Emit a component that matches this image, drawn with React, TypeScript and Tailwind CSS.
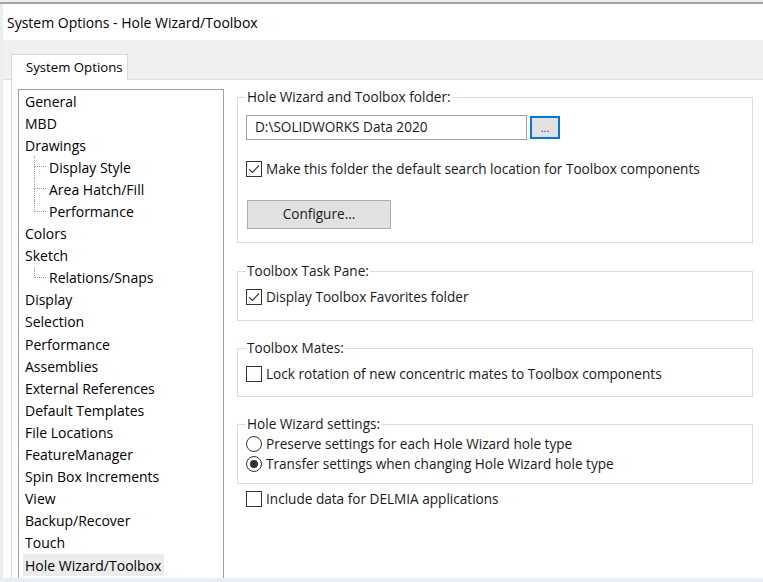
import React from 'react';

const FONT = { fontFamily: '"Open Sans", "Noto Sans", sans-serif' };

type TreeItem = { label: string; child?: boolean; last?: boolean; selected?: boolean };

const treeItems: TreeItem[] = [
  { label: 'General' },
  { label: 'MBD' },
  { label: 'Drawings' },
  { label: 'Display Style', child: true },
  { label: 'Area Hatch/Fill', child: true },
  { label: 'Performance', child: true, last: true },
  { label: 'Colors' },
  { label: 'Sketch' },
  { label: 'Relations/Snaps', child: true, last: true },
  { label: 'Display' },
  { label: 'Selection' },
  { label: 'Performance' },
  { label: 'Assemblies' },
  { label: 'External References' },
  { label: 'Default Templates' },
  { label: 'File Locations' },
  { label: 'FeatureManager' },
  { label: 'Spin Box Increments' },
  { label: 'View' },
  { label: 'Backup/Recover' },
  { label: 'Touch' },
  { label: 'Hole Wizard/Toolbox', selected: true },
];

function TreeRow({ item }: { item: TreeItem }) {
  if (item.child) {
    return (
      <div className="flex h-[22.1px] items-stretch">
        <div className="ml-[15px] flex w-[12px] flex-col">
          <div className="h-1/2 border-b border-l border-dotted border-[#a0a0a0]" />
          <div className={item.last ? 'h-1/2' : 'h-1/2 border-l border-dotted border-[#a0a0a0]'} />
        </div>
        <div className="flex items-center pl-[3px]">{item.label}</div>
      </div>
    );
  }
  return (
    <div className="flex h-[22.1px] items-stretch pl-[4px]">
      <div className={item.selected ? 'flex items-center bg-[#ececec] pl-[2px] pr-[3px]' : 'flex items-center pl-[2px]'}>
        {item.label}
      </div>
    </div>
  );
}

function CheckBox({ checked }: { checked?: boolean }) {
  return (
    <div className="flex h-[16px] w-[16px] shrink-0 items-center justify-center border border-[#333333] bg-white">
      {checked && (
        <svg width="14" height="14" viewBox="0 0 14 14">
          <polyline points="2,7.2 5.3,10.5 12,3.5" fill="none" stroke="#333333" strokeWidth="1.1" />
        </svg>
      )}
    </div>
  );
}

function Radio({ checked }: { checked?: boolean }) {
  return (
    <div className="flex h-[16px] w-[16px] shrink-0 items-center justify-center rounded-full border border-[#333333] bg-white">
      {checked && <div className="h-[8px] w-[8px] rounded-full bg-[#333333]" />}
    </div>
  );
}

function CheckRow({ checked, label, className }: { checked?: boolean; label: string; className?: string }) {
  return (
    <div className={'flex h-[16px] items-center gap-[4px] ' + (className ?? '')}>
      <CheckBox checked={checked} />
      <span className="leading-[16px]">{label}</span>
    </div>
  );
}

function RadioRow({ checked, label }: { checked?: boolean; label: string }) {
  return (
    <div className="flex h-[20px] items-center gap-[4px]">
      <Radio checked={checked} />
      <span className="leading-[16px]">{label}</span>
    </div>
  );
}

function Group({ title, className, children }: { title: string; className?: string; children: React.ReactNode }) {
  return (
    <fieldset className={'border border-[#dcdcdc] pl-[8px] pr-[8px] ' + (className ?? '')}>
      <legend className="px-[1px] leading-[18px]">{title}</legend>
      {children}
    </fieldset>
  );
}

export default function App() {
  return (
    <div className="flex h-[582px] w-[763px] flex-col overflow-hidden bg-white text-[13.6px] text-[#1a1a1a]" style={FONT}>
      <div className="h-[2px] shrink-0 bg-[#eaf0f2]" />
      <div className="h-[2px] shrink-0 bg-[#a3a3a3]" />
      <div className="flex min-h-0 flex-1">
        <div className="w-[3px] shrink-0 bg-[#e8eff2]" />
        <div className="flex min-w-0 flex-1 flex-col">
          <div className="flex h-[36px] shrink-0 items-center pl-[4px] text-[14px] text-black">
            System Options - Hole Wizard/Toolbox
          </div>
          <div className="flex h-[40px] shrink-0 items-end border-b border-[#dfdfdf] bg-[#f0f0f0] pl-[8px]">
            <div className="-mb-px flex h-[26px] w-[117px] items-center border border-b-0 border-[#d9d9d9] bg-white pl-[14px] text-[13.2px] text-black">
              System Options
            </div>
          </div>
          <div className="ml-[8px] flex min-h-0 flex-1 overflow-hidden border-l border-[#d9d9d9] pl-[6px] pt-[8px]">
            <div className="mt-[1px] h-[520px] w-[206px] shrink-0 border border-[#a0a0a0] text-[14px] text-black">
              {treeItems.map((item, i) => (
                <TreeRow key={i} item={item} />
              ))}
            </div>
            <div className="ml-[13px] flex w-[516px] shrink-0 flex-col">
              <Group title="Hole Wizard and Toolbox folder:" className="pb-[13px]">
                <div className="mt-[9px] flex items-center gap-[3px]">
                  <div className="flex h-[25px] w-[281px] items-center border border-[#a0a0a0] bg-white pl-[8px]">
                    D:\SOLIDWORKS Data 2020
                  </div>
                  <div className="flex h-[23px] w-[30px] items-center justify-center border-2 border-[#0078d7] bg-[#e1e1e1] text-[11px] leading-none text-[#3a3a8a]">
                    ...
                  </div>
                </div>
                <CheckRow checked label="Make this folder the default search location for Toolbox components" className="mt-[21px]" />
                <div className="ml-[1px] mt-[23px] flex h-[29px] w-[144px] items-center justify-center border border-[#adadad] bg-[#e1e1e1]">
                  Configure...
                </div>
              </Group>
              <Group title="Toolbox Task Pane:" className="mt-[19px] pb-[15px]">
                <CheckRow checked label="Display Toolbox Favorites folder" className="mt-[9px]" />
              </Group>
              <Group title="Toolbox Mates:" className="mt-[18px] pb-[14px]">
                <CheckRow label="Lock rotation of new concentric mates to Toolbox components" className="mt-[9px]" />
              </Group>
              <Group title="Hole Wizard settings:" className="mt-[18px] pb-[9px]">
                <div className="mt-[1px]">
                  <RadioRow label="Preserve settings for each Hole Wizard hole type" />
                  <RadioRow checked label="Transfer settings when changing Hole Wizard hole type" />
                </div>
              </Group>
              <CheckRow label="Include data for DELMIA applications" className="ml-[9px] mt-[7px]" />
            </div>
          </div>
        </div>
      </div>
      <div className="h-[4px] shrink-0 bg-[#e8eff2]" />
    </div>
  );
}
